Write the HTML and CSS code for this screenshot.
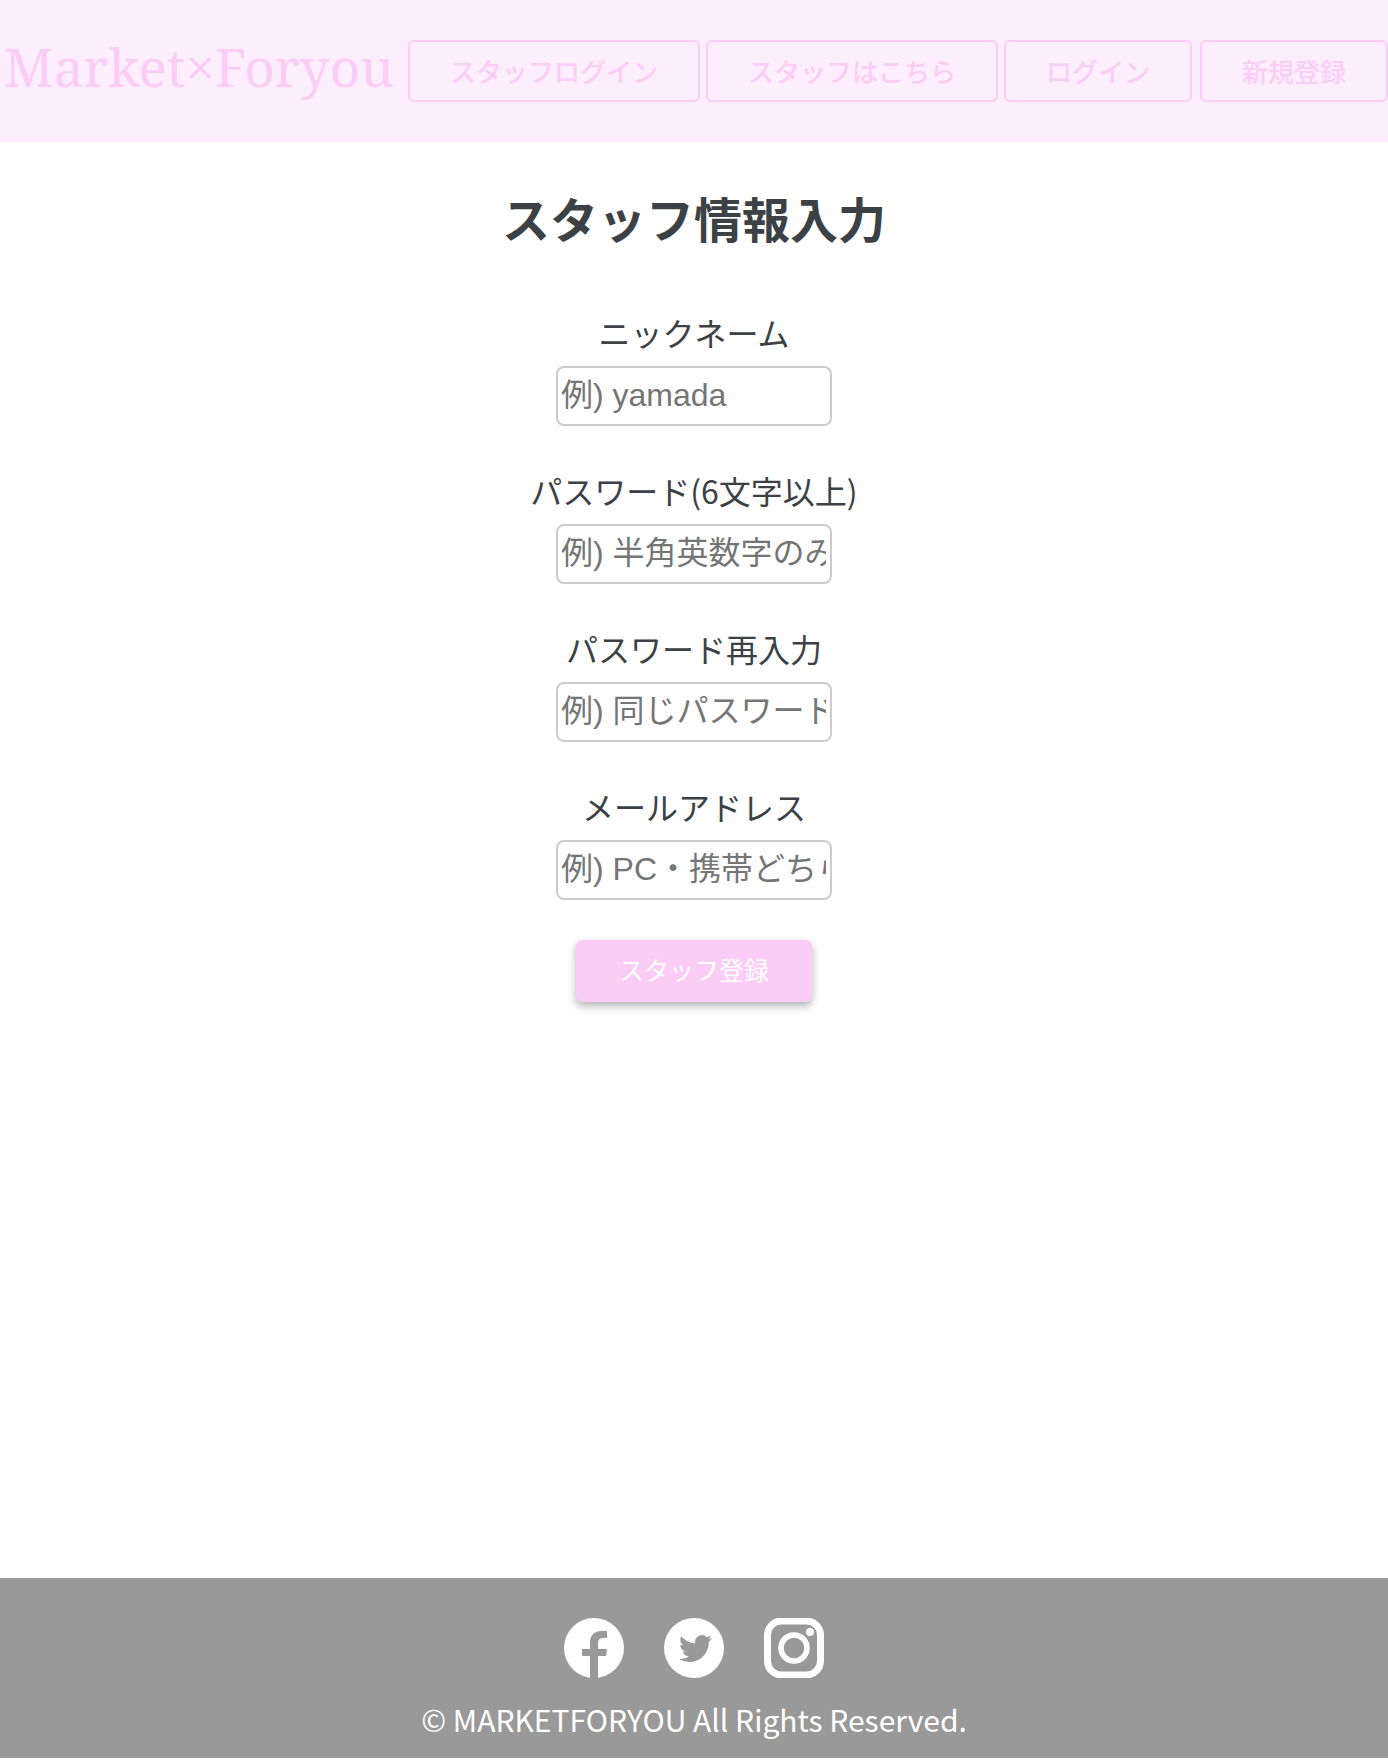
FILE: index.html
```html
<!DOCTYPE html>
<html lang="ja">
<head>
  <meta charset="UTF-8">
  <meta name="viewport" content="width=device-width, initial-scale=1">
  <title>Market×Foryou</title>
  <link rel="stylesheet" href="styles.css">
</head>
<body>
  <header class="header">
    <a class="logo" href="#">Market×Foryou</a>
    <nav class="nav">
      <a class="nav-link" href="#">スタッフログイン</a>
      <a class="nav-link" href="#">スタッフはこちら</a>
      <a class="nav-link" href="#">ログイン</a>
      <a class="nav-link" href="#">新規登録</a>
    </nav>
  </header>

  <main class="main">
    <h1 class="title">スタッフ情報入力</h1>
    <form class="form">
      <div class="field">
        <label for="nickname">ニックネーム</label>
        <input class="text-box" id="nickname" type="text" placeholder="例) yamada">
      </div>
      <div class="field">
        <label for="password">パスワード(6文字以上)</label>
        <input class="text-box" id="password" type="password" placeholder="例) 半角英数字のみ">
      </div>
      <div class="field">
        <label for="password-confirm">パスワード再入力</label>
        <input class="text-box" id="password-confirm" type="password" placeholder="例) 同じパスワード">
      </div>
      <div class="field">
        <label for="email">メールアドレス</label>
        <input class="text-box" id="email" type="email" placeholder="例) PC・携帯どちらでも可">
      </div>
      <button class="submit" type="submit">スタッフ登録</button>
    </form>
  </main>

  <footer class="footer">
    <div class="social">
      <a href="#" aria-label="Facebook">
        <svg class="social-icon" viewBox="0 0 60 60">
          <circle cx="30" cy="30" r="30" fill="#fff"/>
          <path fill="#999" d="M26 60V38h-8v-7h8v-6q0-12 12-12h5v7h-4q-5 0-5 5v6h9l-1 7h-8v22z"/>
        </svg>
      </a>
      <a href="#" aria-label="Twitter">
        <svg class="social-icon" viewBox="0 0 60 60">
          <circle cx="30" cy="30" r="30" fill="#fff"/>
          <path fill="#999" transform="translate(15 14) scale(1.38)" d="M23.95 4.57a10 10 0 0 1-2.82.77 4.96 4.96 0 0 0 2.16-2.72c-.95.55-2 .95-3.13 1.18a4.92 4.92 0 0 0-8.38 4.48C7.69 8.1 4.07 6.13 1.64 3.16a4.82 4.82 0 0 0-.67 2.48c0 1.71.87 3.21 2.19 4.1a4.9 4.9 0 0 1-2.23-.62v.06a4.92 4.92 0 0 0 3.95 4.83 5 5 0 0 1-2.21.08 4.94 4.94 0 0 0 4.6 3.42A9.87 9.87 0 0 1 0 19.54a13.99 13.99 0 0 0 7.55 2.21c9.05 0 14-7.5 14-13.98 0-.21 0-.42-.02-.63a9.94 9.94 0 0 0 2.42-2.57z"/>
        </svg>
      </a>
      <a href="#" aria-label="Instagram">
        <svg class="social-icon" viewBox="0 0 60 60" fill="none" stroke="#fff">
          <rect x="3.5" y="3" width="53" height="54" rx="14" stroke-width="7"/>
          <circle cx="30" cy="30" r="13" stroke-width="5.5"/>
          <circle cx="46" cy="14" r="4" fill="#fff" stroke="none"/>
        </svg>
      </a>
    </div>
    <p class="copyright">© MARKETFORYOU All Rights Reserved.</p>
  </footer>
</body>
</html>
```
FILE: styles.css
```css
* {
  box-sizing: border-box;
}

body {
  margin: 0;
  min-height: 100vh;
  padding-bottom: 2px;
  display: flex;
  flex-direction: column;
  background: #fff;
  color: #3c4146;
  font-family: "Noto Sans CJK JP", sans-serif;
  font-size: 32px;
  line-height: 48px;
}

.header {
  display: flex;
  justify-content: space-between;
  align-items: center;
  padding: 40px 0;
  background: #fceefc;
}

.logo {
  padding: 0 0 8px 4px;
  color: #fbcdf6;
  font-family: "Noto Serif", "Liberation Serif", serif;
  font-size: 53px;
  line-height: 54px;
  text-decoration: none;
}

.nav {
  display: flex;
  gap: 6px;
}

.nav-link {
  padding: 10px 40px;
  border: 2px solid #fbcdf6;
  border-radius: 6px;
  color: #fbcdf6;
  font-size: 26px;
  font-weight: 500;
  line-height: 38px;
  text-decoration: none;
  white-space: nowrap;
}

.nav-link:last-child {
  margin-left: 2px;
}

.main {
  flex: 1;
  padding: 40px 0;
  text-align: center;
}

.title {
  margin: 0 0 56px;
  font-size: 48px;
  font-weight: 700;
  line-height: 70px;
}

.form {
  display: flex;
  flex-direction: column;
  align-items: center;
}

.field {
  display: flex;
  flex-direction: column;
  align-items: center;
  gap: 10px;
  margin-bottom: 40px;
}

.text-box {
  width: 276px;
  height: 60px;
  padding: 0 4px 2px 3px;
  border: 2px solid #ccc;
  border-radius: 8px;
  background: #fff;
  font-family: "Liberation Sans", "Noto Sans CJK JP", sans-serif;
  font-size: 32px;
}

.text-box::placeholder {
  color: #757575;
}

.submit {
  width: 236px;
  padding: 10px 0 14px;
  border: 0;
  border-radius: 6px;
  background: #fbcdf6;
  box-shadow: 0 4px 8px rgba(0, 0, 0, 0.3);
  color: #fff;
  font-family: inherit;
  font-size: 25px;
  font-weight: 400;
  line-height: 38px;
}

.footer {
  padding: 40px 0 16px;
  background: #999;
  color: #fff;
  text-align: center;
}

.social {
  display: flex;
  justify-content: center;
  gap: 40px;
  margin-bottom: 18px;
}

.social-icon {
  display: block;
  width: 60px;
  height: 60px;
}

.copyright {
  margin: 0;
  font-size: 30px;
  line-height: 46px;
}
```
